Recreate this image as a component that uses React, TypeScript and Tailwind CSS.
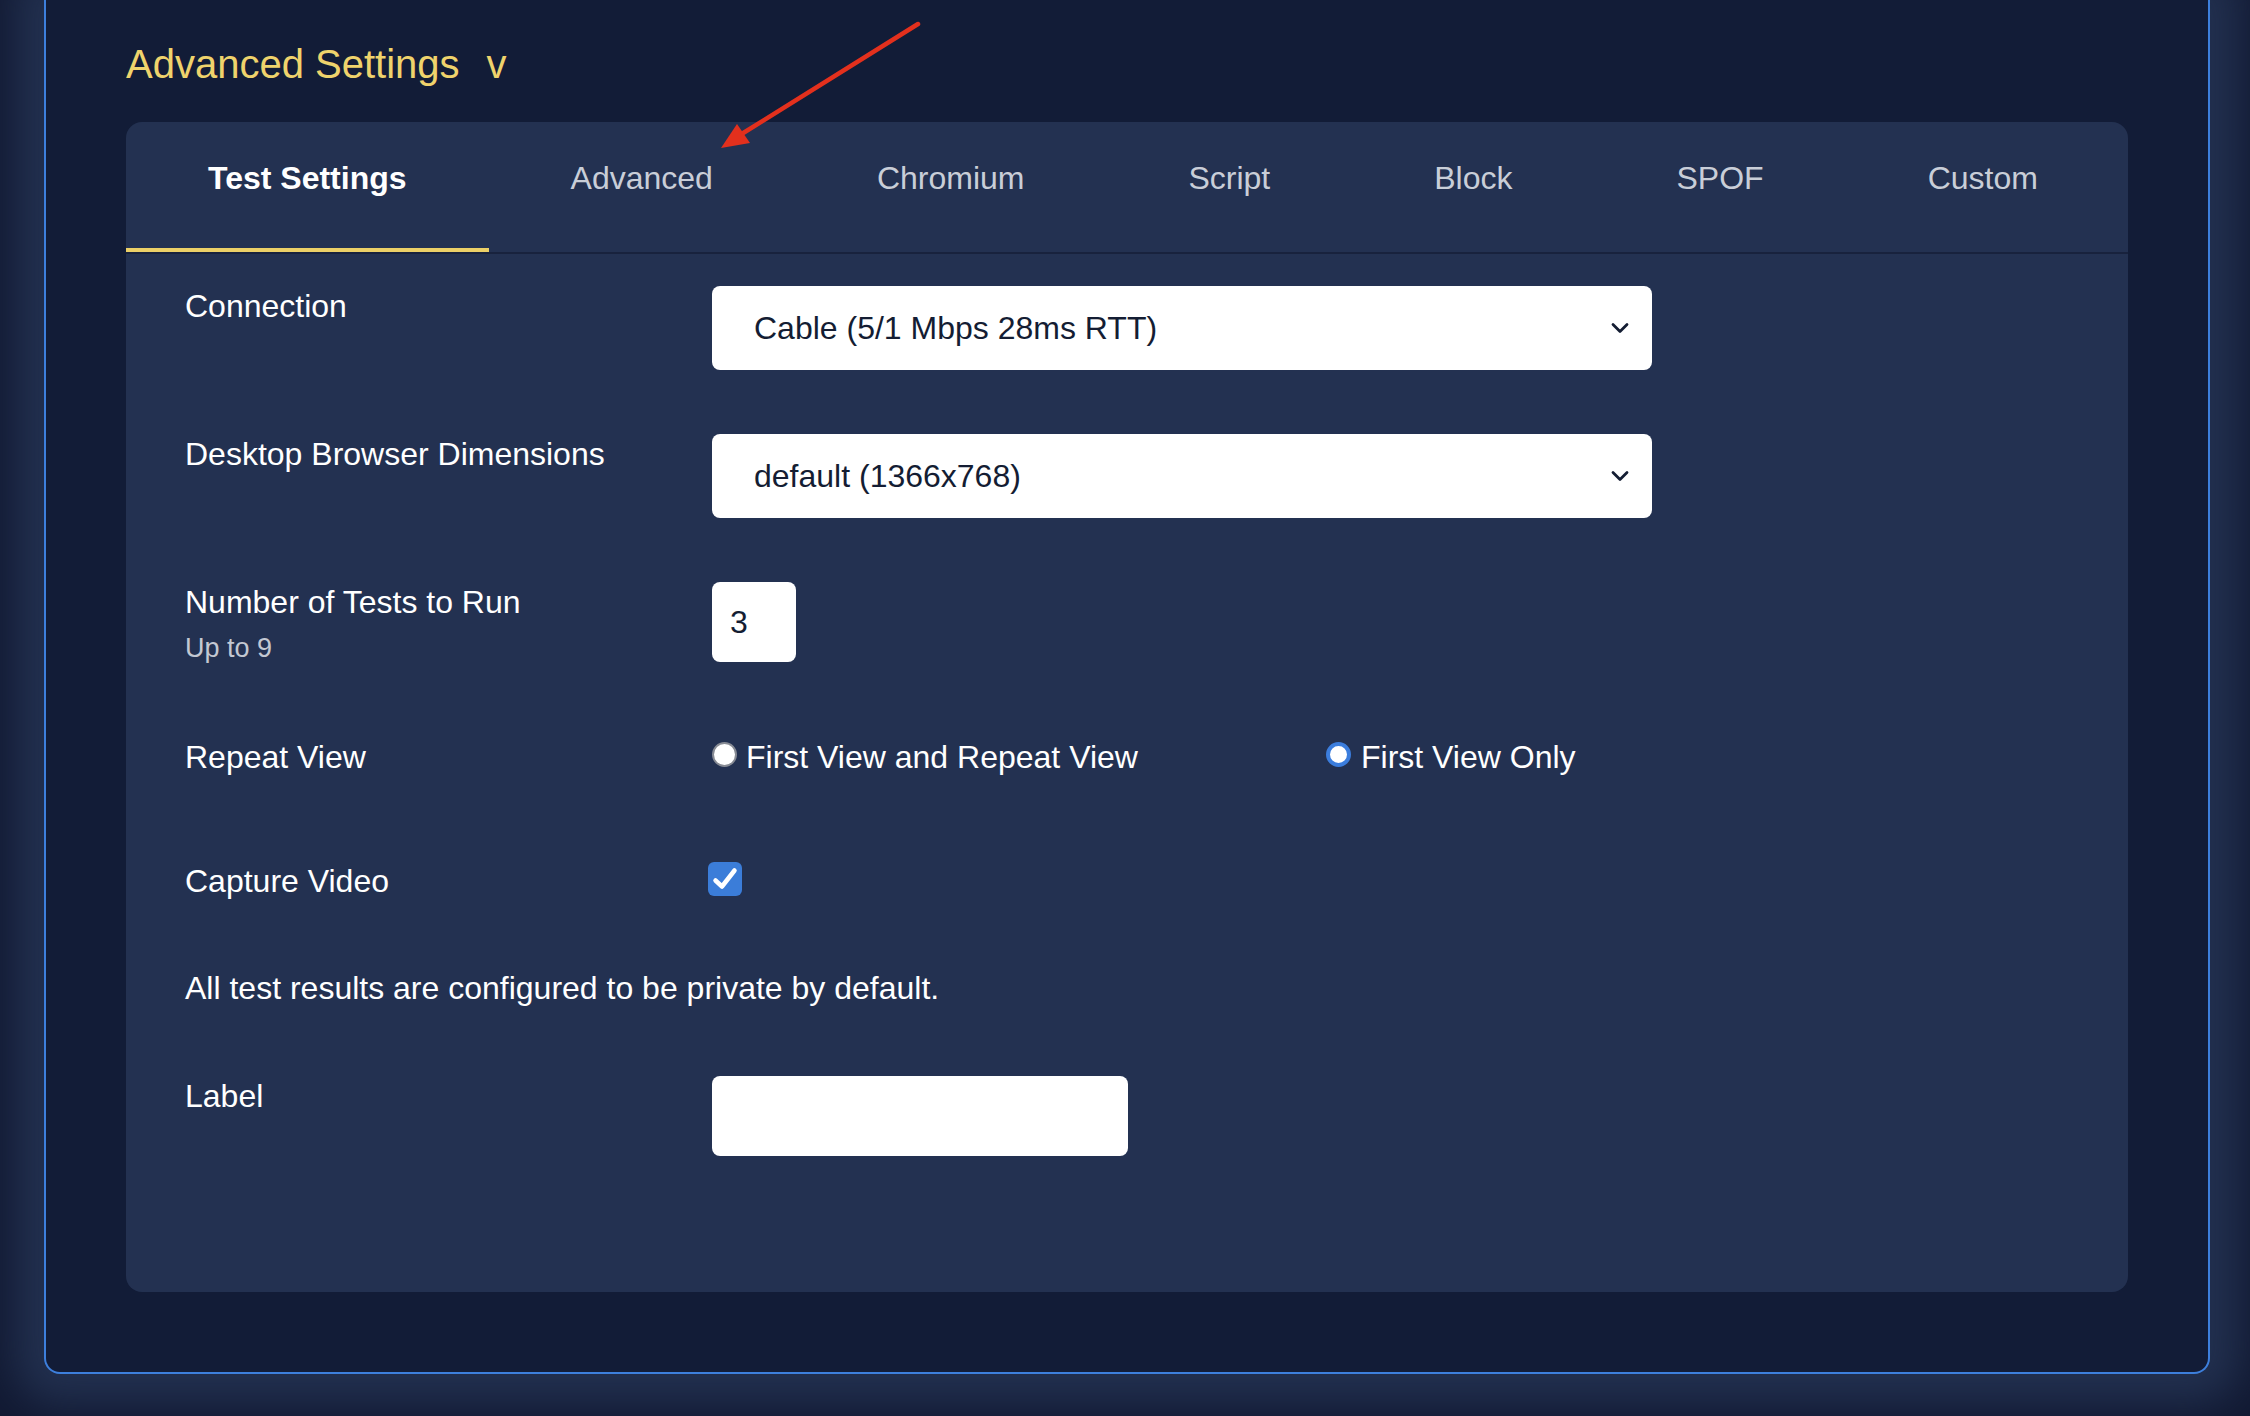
import type { ReactNode } from "react";

const tabs = ["Test Settings", "Advanced", "Chromium", "Script", "Block", "SPOF", "Custom"];

interface RowProps {
  label: string;
  sub?: string;
  height: string;
  children?: ReactNode;
}

function Row({ label, sub, height, children }: RowProps) {
  return (
    <div className={`flex ${height}`}>
      <div className="w-[527px] shrink-0">
        <div className="text-[32px] leading-[40px] text-white">{label}</div>
        {sub && <div className="mt-[6px] text-[27px] leading-[40px] text-[#c3c8d2]">{sub}</div>}
      </div>
      <div className="flex-1">{children}</div>
    </div>
  );
}

function Select({ value }: { value: string }) {
  return (
    <div className="relative w-[940px]">
      <select
        defaultValue={value}
        className="h-[84px] w-full appearance-none rounded-[8px] bg-white pl-[42px] text-[32px] text-[#141d33] outline-none"
      >
        <option>{value}</option>
      </select>
      <svg
        className="pointer-events-none absolute right-[23px] top-1/2 -translate-y-1/2"
        width="18"
        height="11"
        viewBox="0 0 18 11"
      >
        <path d="M2 2 L9 9 L16 2" stroke="#141d33" strokeWidth="2.8" fill="none" strokeLinecap="round" strokeLinejoin="round" />
      </svg>
    </div>
  );
}

export default function App() {
  return (
    <div className="relative h-[1416px] w-full overflow-hidden bg-[#121a33] pl-[44px] pr-[40px] font-['Liberation_Sans',Arial,sans-serif]">
      <section className="rounded-b-2xl border-2 border-t-0 border-[#3d7fdc] bg-[#121c37] px-[80px] pt-[41px] pb-[80px] shadow-[0_0_40px_30px_#22304f]">
        <h2 className="mb-[35px] text-[40px] leading-[46px] text-[#efd36c]">
          Advanced Settings<span className="ml-[27px]">v</span>
        </h2>

        <div className="rounded-2xl bg-[#233151]">
          <div className="flex border-b-2 border-[#18223d]">
            {tabs.map((t, i) => (
              <button
                key={t}
                className={`border-b-4 px-[82px] pt-[38px] pb-[51px] text-[32px] leading-[37px] ${
                  i === 0 ? "border-[#ecd067] font-bold text-white" : "border-transparent text-[#c9ced8]"
                }`}
              >
                {t}
              </button>
            ))}
          </div>

          <div className="pl-[59px] pt-[32px] pb-[136px]">
            <Row label="Connection" height="h-[148px]">
              <Select value="Cable (5/1 Mbps 28ms RTT)" />
            </Row>
            <Row label="Desktop Browser Dimensions" height="h-[148px]">
              <Select value="default (1366x768)" />
            </Row>
            <Row label="Number of Tests to Run" sub="Up to 9" height="h-[155px]">
              <input
                readOnly
                value="3"
                className="h-[80px] w-[84px] rounded-[8px] bg-white pl-[18px] text-[32px] text-[#141d33] outline-none"
              />
            </Row>
            <Row label="Repeat View" height="h-[124px]">
              <div className="flex">
                <label className="flex w-[614px] items-start">
                  <span className="mt-[5px] h-[25px] w-[25px] shrink-0 rounded-full border-2 border-[#878b94] bg-white" />
                  <span className="ml-[9px] text-[32px] leading-[40px] text-white">First View and Repeat View</span>
                </label>
                <label className="flex items-start">
                  <span className="mt-[5px] h-[25px] w-[25px] shrink-0 rounded-full border-4 border-[#3b7ddd] bg-white" />
                  <span className="ml-[10px] text-[32px] leading-[40px] text-white">First View Only</span>
                </label>
              </div>
            </Row>
            <Row label="Capture Video" height="h-[107px]">
              <span className="-ml-[4px] mt-[1px] flex h-[34px] w-[34px] items-center justify-center rounded-[6px] bg-[#3b7dd9]">
                <svg width="34" height="34" viewBox="0 0 34 34">
                  <path d="M7.5 18.5 L14 24.5 L26.5 8.5" stroke="#fff" strokeWidth="4.5" fill="none" strokeLinecap="round" strokeLinejoin="round" />
                </svg>
              </span>
            </Row>
            <div className="h-[108px] text-[32px] leading-[40px] text-white">
              All test results are configured to be private by default.
            </div>
            <Row label="Label" height="h-[80px]">
              <input className="h-[80px] w-[416px] rounded-[8px] bg-white px-[18px] text-[32px] text-[#141d33] outline-none" />
            </Row>
          </div>
        </div>
      </section>

      {/* annotation arrow */}
      <svg className="pointer-events-none absolute inset-0" width="2250" height="1416" viewBox="0 0 2250 1416">
        <line x1="918" y1="24" x2="740" y2="135" stroke="#e3301d" strokeWidth="4.5" strokeLinecap="round" />
        <polygon points="721,148 737,124 750,143" fill="#e3301d" />
      </svg>
    </div>
  );
}
